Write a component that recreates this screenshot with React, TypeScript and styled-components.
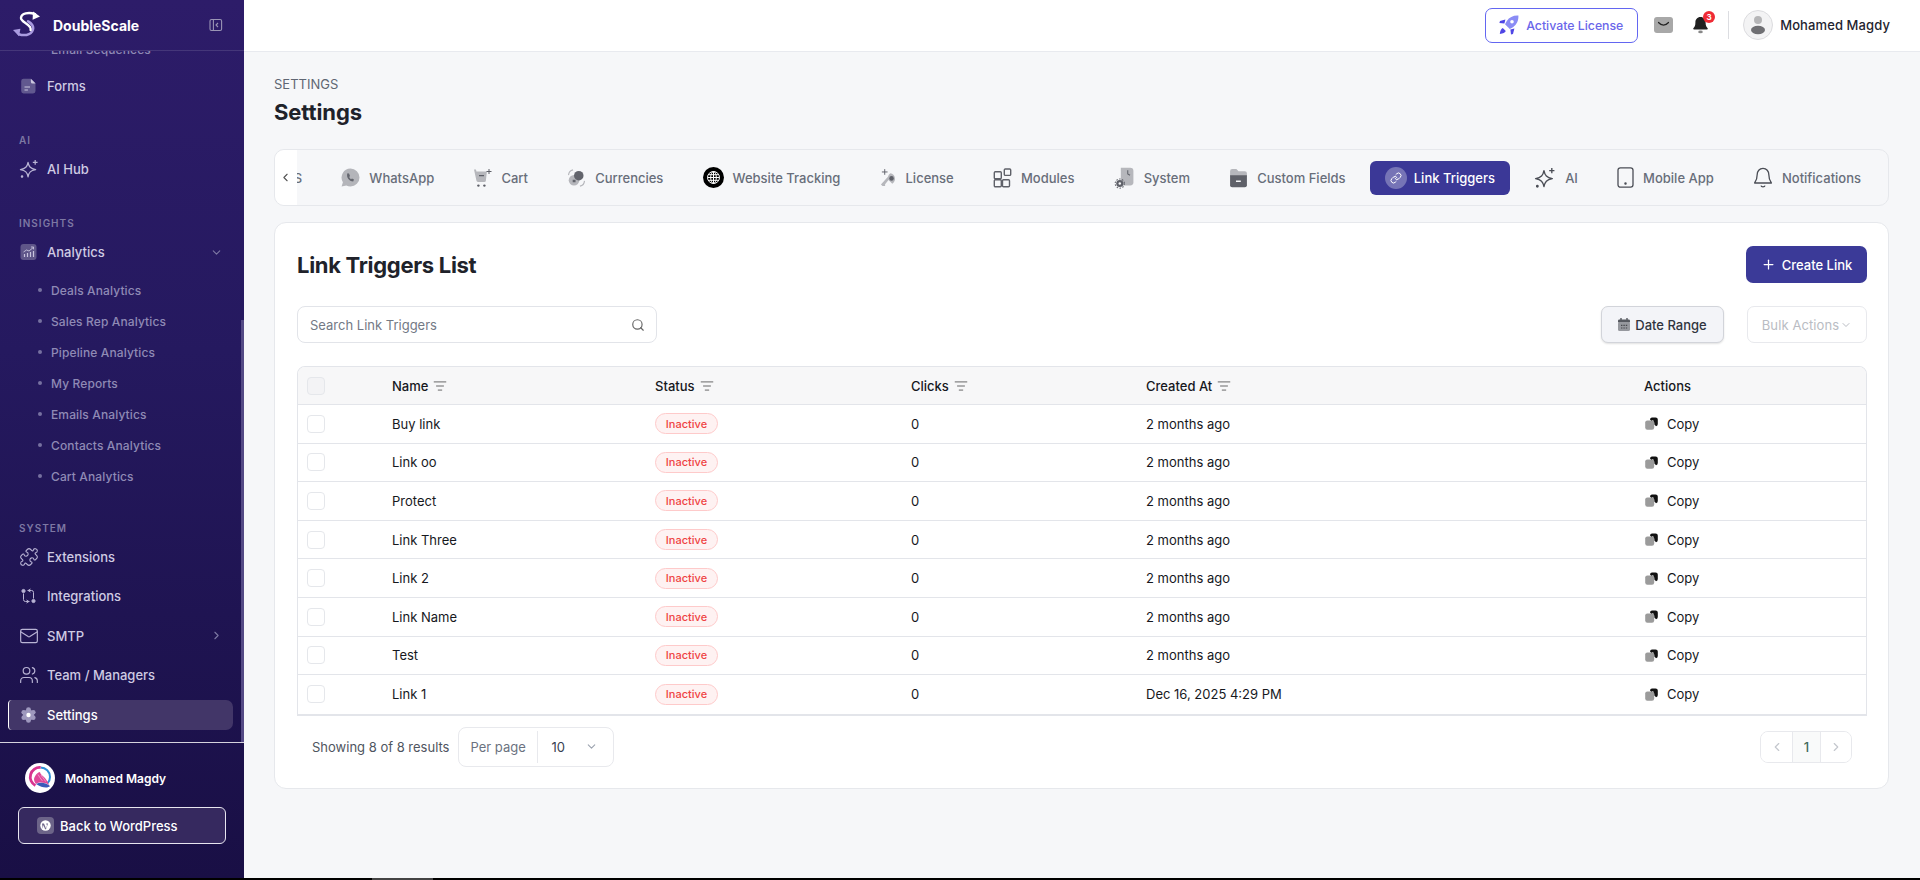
import React from "react";
import styled, { createGlobalStyle } from "styled-components";
import { ChevronDown, ChevronLeft, ChevronRight, ListFilter, Mail, Plus, Puzzle, Search, Users, Link as LinkGlyph } from "lucide-react";

const Global = createGlobalStyle`
  html, body { margin: 0; padding: 0; height: 880px; overflow: hidden; background: #000; }
  body { font-family: Inter, "Liberation Sans", sans-serif; color: #1f2937; }
  * { box-sizing: border-box; }
`;

const Frame = styled.div`
  width: 1920px; height: 880px; display: flex; flex-direction: column;
`;
const Shell = styled.div`
  flex: 1; min-height: 0; display: flex; background: #f6f7f9;
`;
const BottomStrip = styled.div`
  height: 2px; background: #000; padding-left: 372px; display: flex;
`;
const StripThumb = styled.div`
  width: 61px; background: #444;
`;
const Sidebar = styled.aside`
  width: 244px; flex: none; display: flex; flex-direction: column;
  background: linear-gradient(180deg, #2d1c69 0%, #25195f 40%, #190f45 100%);
`;
const Brand = styled.div`
  height: 51px; flex: none; display: flex; align-items: center; padding: 0 21px 0 13px;
  border-bottom: 1px solid rgba(255,255,255,.12); gap: 12px;
`;
const BrandName = styled.div`
  flex: 1; font-size: 14px; font-weight: 700; color: #fff;
`;
const ScrollArea = styled.div`
  flex: 1; min-height: 0; overflow: hidden; position: relative; padding: 0 11px 0 8px;
`;
const ScrollThumb = styled.div`
  position: absolute; right: 0; top: 269px; bottom: 0; width: 3px; background: #544a85;
`;
const NavFlow = styled.nav`
  margin-top: -17.4px; display: flex; flex-direction: column;
`;
const Section = styled.section<{ $mt?: number }>`
  display: flex; flex-direction: column; margin-top: ${p => p.$mt ?? 32}px;
`;
const SectionLabel = styled.div`
  height: 14px; line-height: 14px; margin: 0 0 7px 11px; font-size: 10px; font-weight: 600;
  letter-spacing: 1px; color: #7d78a3; text-transform: uppercase;
`;
const NavList = styled.div`
  display: flex; flex-direction: column; gap: 9.4px;
`;
const NavItem = styled.div<{ $active?: boolean }>`
  height: 30px; display: flex; align-items: center; gap: 10px; padding: 0 11px 0 11px;
  font-size: 13px; font-weight: 500; border-radius: 0 7px 7px 0; width: 225px;
  color: ${p => (p.$active ? "#fff" : "#cfcbe3")};
  background: ${p => (p.$active ? "#423668" : "transparent")};
  border-left: 1px solid ${p => (p.$active ? "#fff" : "transparent")};
  border-top-left-radius: ${p => (p.$active ? "4px" : "0")};
  border-bottom-left-radius: ${p => (p.$active ? "4px" : "0")};
  svg.main { flex: none; color: #b9b4d4; }
  svg.lucide.main { margin: 0 -1.5px; }
`;
const NavText = styled.span` flex: 1; `;
const Caret = styled.span`
  display: flex; color: #7d78a3; margin-right: -1px;
`;
const SubList = styled.div<{ $mt?: number }>`
  display: flex; flex-direction: column; margin-top: ${p => p.$mt ?? -1.8}px; margin-bottom: -2px;
`;
const SubItem = styled.div`
  height: 31px; display: flex; align-items: center; padding-left: 30px; gap: 9px;
  font-size: 12px; font-weight: 500; color: #8f8ab5; letter-spacing: .12px;
`;
const Dot = styled.i`
  width: 4px; height: 4px; border-radius: 50%; background: #7671a0; flex: none;
`;
const SideFoot = styled.div`
  flex: none; height: 136px; border-top: 1px solid #d6d3dd; padding: 20px 18px 0; display: flex; flex-direction: column; gap: 14px;
`;
const Profile = styled.div`
  display: flex; align-items: center; gap: 10px; padding-left: 7px; font-size: 12px; font-weight: 600; color: #fff;
`;
const AvatarLogo = styled.svg`
  width: 30px; height: 30px; flex: none;
`;
const BackButton = styled.div`
  width: 208px; height: 37px; display: flex; align-items: center; gap: 6px; padding-left: 18px;
  border: 1px solid #e7e5ef; border-radius: 6px; background: #36295f; color: #fff; font-size: 13px; font-weight: 500;
`;
const WpTile = styled.span`
  width: 17px; height: 17px; border-radius: 4px; background: #6c6488; display: flex; align-items: center; justify-content: center;
`;

const Main = styled.main`
  flex: 1; min-width: 0; display: flex; flex-direction: column;
`;
const Topbar = styled.header`
  height: 52px; flex: none; background: #fff; border-bottom: 1px solid #e8eaef;
  display: flex; align-items: center; justify-content: flex-end; padding: 0 30px 1px 0;
`;
const ActivateBtn = styled.div`
  width: 153px; height: 35px; border: 1px solid #6366f1; border-radius: 7px; display: flex; align-items: center; gap: 7px; padding-left: 13px;
  font-size: 12.3px; font-weight: 500; color: #6a66ea; margin-right: 16px; background: #fff;
`;
const TopIcon = styled.span<{ $mr: number }>`
  display: flex; position: relative; margin-right: ${p => p.$mr}px;
`;
const Badge = styled.span`
  position: absolute; top: -5px; right: -7px; width: 12px; height: 12px; border-radius: 50%; background: #ef2b35; color: #fff;
  font-size: 8px; font-weight: 700; display: flex; align-items: center; justify-content: center;
`;
const VDivider = styled.div`
  width: 1px; height: 28px; background: #dcdde1; margin-right: 14px;
`;
const UserCircle = styled.span`
  width: 30px; height: 30px; border-radius: 50%; border: 1px solid #dcdcdf; background: #f3f3f4; display: flex; align-items: center; justify-content: center; overflow: hidden; margin-right: 7px; color: #777;
`;
const UserName = styled.span`
  font-size: 13px; font-weight: 500; color: #1f2430; letter-spacing: .1px;
`;
const Content = styled.div`
  flex: 1; padding: 24px 31px 0 30px; display: flex; flex-direction: column;
`;
const Crumb = styled.div`
  font-size: 13px; line-height: 16px; color: #5f6673; text-transform: uppercase; font-weight: 400;
`;
const PageTitle = styled.h1`
  margin: 5px 0 0; font-size: 22px; line-height: 30px; font-weight: 650; color: #20222a; letter-spacing: -.1px;
`;
const TabsBar = styled.div`
  margin-top: 22px; height: 57px; border: 1px solid #e6e8ec; border-radius: 10px; position: relative; overflow: hidden;
  display: flex; align-items: center; justify-content: flex-end; padding-right: 12px;
`;
const TabScrollBtn = styled.div`
  position: absolute; left: 0; top: 0; bottom: 0; width: 22px; background: #fff; display: flex; align-items: center; justify-content: flex-end; padding-right: 5px; color: #555; border-radius: 8px 0 0 8px; z-index: 1;
`;
const Tab = styled.div<{ $active?: boolean }>`
  flex: none; height: 34px; display: flex; align-items: center; gap: 9px; padding: 0 15px; margin-left: 9.2px; border-radius: 6px;
  font-size: 13px; font-weight: 500; white-space: nowrap;
  color: ${p => (p.$active ? "#fff" : "#686e7a")};
  background: ${p => (p.$active ? "#3b3897" : "transparent")};
  svg { flex: none; }
`;
const LinkCircle = styled.span`
  width: 22px; height: 22px; border-radius: 50%; background: rgba(255,255,255,.3); display: flex; align-items: center; justify-content: center; color: #fff; margin-right: -2px;
`;
const Card = styled.section`
  margin-top: 16px; background: #fff; border: 1px solid #e6e8ec; border-radius: 12px; padding: 23px 21px 21px 22px;
`;
const CardHead = styled.div`
  display: flex; justify-content: space-between; align-items: center; height: 37px;
`;
const CardTitle = styled.h2`
  margin: 0; font-size: 22px; font-weight: 650; color: #20222a; letter-spacing: -.3px;
`;
const CreateBtn = styled.div`
  width: 121px; height: 37px; border-radius: 7px; background: #3b3a98; color: #fff; display: flex; align-items: center; justify-content: center; gap: 6px; font-size: 13px; font-weight: 500;
`;
const Toolbar = styled.div`
  margin-top: 23px; display: flex; align-items: center; height: 37px; gap: 23px;
`;
const SearchBox = styled.div`
  width: 360px; height: 37px; border: 1px solid #e2e4e9; border-radius: 8px; display: flex; align-items: center; justify-content: space-between; padding: 0 11px 0 12px;
  color: #737985; font-size: 13px; margin-right: auto;
`;
const DateBtn = styled.div`
  width: 123px; height: 37px; border: 1px solid #d2d4da; border-radius: 7px; background: #f3f4f8; box-shadow: 0 1px 2px rgba(0,0,0,.12);
  display: flex; align-items: center; justify-content: center; gap: 5px; font-size: 13px; font-weight: 500; color: #30343f;
`;
const BulkBtn = styled.div`
  width: 120px; height: 37px; border: 1px solid #e8e9ed; border-radius: 7px; display: flex; align-items: center; justify-content: center; gap: 1px;
  font-size: 13px; letter-spacing: .1px; color: #b9bcc3; background: #fff;
`;
const Table = styled.div`
  margin-top: 23px; border: 1px solid #e3e5ea; border-bottom-width: 2px; border-radius: 8px 8px 0 0; overflow: hidden;
`;
const Row = styled.div<{ $head?: boolean }>`
  display: grid; grid-template-columns: 94px 263px 256px 235px 498px 1fr; align-items: center;
  height: ${p => (p.$head ? "38px" : "38.6px")};
  background: ${p => (p.$head ? "#f7f7f8" : "#fff")};
  border-bottom: 1px solid #e3e5ea;
  font-size: 13px; font-weight: ${p => (p.$head ? 500 : 400)}; color: #16181d;
  &:last-child { border-bottom: 0; }
`;
const CheckCell = styled.div`
  padding-left: 9px; display: flex;
`;
const CheckBox = styled.span`
  width: 18px; height: 18px; border: 1px solid #e5e7eb; border-radius: 4px; background: #fff;
`;
const HeadCheck = styled(CheckBox)`
  background: #f3f3f5;
`;
const HeadCell = styled.div`
  display: flex; align-items: center; gap: 5px;
  svg { color: #555; }
`;
const StatusPill = styled.span`
  display: inline-flex; align-items: center; justify-content: center; width: 63px; height: 21px; border-radius: 11px; border: 1px solid #fecaca; background: #fef2f2; color: #ef4444; font-size: 11px; font-weight: 500;
`;
const CopyCell = styled.div`
  display: flex; align-items: center; gap: 9px; padding-left: 1px;
`;
const TableFoot = styled.div`
  margin-top: 11px; display: flex; align-items: center; padding: 0 15px;
`;
const ShowText = styled.div`
  font-size: 13px; color: #4f5560; margin-right: 9px;
`;
const PerPage = styled.div`
  width: 156px; height: 40px; border: 1px solid #e8e9ed; border-radius: 8px; display: flex; align-items: center; font-size: 13px; color: #6b7280; margin-right: auto;
`;
const PerLabel = styled.div`
  padding: 0 11px; height: 32px; line-height: 32px; border-right: 1px solid #e8e9ed; width: 79px; white-space: nowrap;
`;
const PerValue = styled.div`
  flex: 1; display: flex; justify-content: space-between; align-items: center; padding: 0 15px 0 13px; color: #374151;
  svg { color: #9ca3af; }
`;
const Pager = styled.div`
  width: 92px; height: 32px; border: 1px solid #e8e9ed; border-radius: 8px; display: grid; grid-template-columns: 31px 29px 1fr; overflow: hidden;
`;
const PagerCell = styled.div<{ $on?: boolean }>`
  display: flex; align-items: center; justify-content: center; font-size: 13px; color: ${p => (p.$on ? "#3f6a5a" : "#c4c7cd")};
  background: ${p => (p.$on ? "#f9fafa" : "#fff")};
  border-left: ${p => (p.$on ? "1px solid #e8e9ed" : "0")};
  border-right: ${p => (p.$on ? "1px solid #e8e9ed" : "0")};
  font-weight: 500;
`;

const LogoMark = () => (
  <svg width="28" height="28" viewBox="0 0 28 28" fill="none">
    <path d="M15 10.2c2.6 1.8 5.4 3.4 5.2 7-.2 5-6.4 8.6-14.4 6" stroke="#a99be0" strokeWidth="2.5" strokeLinecap="round" />
    <path d="M0 19l7.4-1.2-1.4 7.4z" fill="#a99be0" />
    <path d="M22 3.2C15.6 .8 8.4 2.4 8 6.8c-.3 3.6 6.2 5 9 9.2.6 1 .8 2 .6 3" stroke="#fff" strokeWidth="2.4" strokeLinecap="round" />
    <path d="M20 .4l7 5-7.4 3.4z" fill="#fff" />
  </svg>
);
const Collapse = () => (
  <svg width="14" height="14" viewBox="0 0 14 14" fill="none" stroke="#9a95b5" strokeWidth="1.1">
    <rect x="1" y="1.5" width="11.6" height="11" rx="1.5" />
    <path d="M4.4 1.5v11M9 5l-2 2 2 2" />
  </svg>
);
const FormsIcon = () => (
  <svg className="main" width="17" height="16" viewBox="-.5 0 17 16">
    <path d="M3 .8h7l5 5V13a2.4 2.4 0 0 1-2.4 2.4H3A2.4 2.4 0 0 1 .7 13V3A2.3 2.3 0 0 1 3 .8z" fill="#61588f" />
    <path d="M10.4.8l4.8 4.8h-3.2a1.6 1.6 0 0 1-1.6-1.6z" fill="#cbc7df" />
    <path d="M4 9h5.5M4 12h3.4" stroke="#cbc7df" strokeWidth="1" />
  </svg>
);
const ChartIcon = () => (
  <svg className="main" width="17" height="16" viewBox="-.5 0 17 16">
    <rect width="16" height="16" rx="3" fill="#5f5689" />
    <path d="M3 8l3-2 2.5 1L13 3.3M10.5 3H13v2.4" stroke="#c8c4de" strokeWidth=".9" fill="none" />
    <path d="M4 13v-3M7 13V9M10 13V8M13 13V7" stroke="#c8c4de" strokeWidth="1.2" />
  </svg>
);
const IntegrationIcon = () => (
  <svg className="main" width="17" height="16" viewBox="-.5 0 17 16" fill="none" stroke="#b9b4d4" strokeWidth="1">
    <circle cx="3" cy="3" r="1.6" fill="#b9b4d4" />
    <circle cx="13" cy="13" r="1.6" fill="#b9b4d4" />
    <path d="M3 5.5v6a2 2 0 0 0 2 2h4M13 10.5v-6a2 2 0 0 0-2-2H7M10 1l-2.4 1.5L10 4M6 12l2.4 1.5L6 15" />
  </svg>
);
const GearIcon = () => (
  <svg className="main" width="17" height="16" viewBox="-.5 0 17 16" fill="#9e98bd">
    <circle cx="8" cy="8" r="5.6" />
    <circle cx="8" cy="2.6" r="2.4" />
    <circle cx="8" cy="13.4" r="2.4" />
    <circle cx="3.3" cy="5.3" r="2.4" />
    <circle cx="12.7" cy="5.3" r="2.4" />
    <circle cx="3.3" cy="10.7" r="2.4" />
    <circle cx="12.7" cy="10.7" r="2.4" />
    <circle cx="8" cy="8" r="2.2" fill="#fff" />
  </svg>
);
const SparkleIcon = ({ size = 21, color = "#4b4e56", sw = 1.3, cls }: { size?: number; color?: string; sw?: number; cls?: string }) => (
  <svg className={cls} width={size} height={size} viewBox="0 0 21 21" fill="none" stroke={color} strokeWidth={sw} strokeLinejoin="round">
    <path d="M9.5 3.5c.9 4.6 2.6 6.6 8 7.6-5.4 1-7.1 3-8 7.6-.9-4.6-2.6-6.6-8-7.6 5.4-1 7.1-3 8-7.6z" />
    <path d="M17 1v5M14.5 3.5h5" />
    <circle cx="3.2" cy="18.4" r=".7" fill={color} />
  </svg>
);
const QLogo = () => (
  <AvatarLogo viewBox="0 0 30 30">
    <circle cx="15" cy="15" r="15" fill="#fff" />
    <path d="M15.6 4.5a9.5 9.5 0 0 1 9.4 9.5c0 2.4-1 4.6-2.4 6.2" fill="none" stroke="#2f8fd6" strokeWidth="2" />
    <path d="M10.4 22.4A9.5 9.5 0 0 1 15.6 4.5" fill="none" stroke="#d8348f" strokeWidth="2.8" />
    <path d="M9 16c1-4 4-7 6-7 0 2 2 3 4 5 2 2 3.4 4 5 8-5-3-10-3-13-1-1-1-2-3-2-5z" fill="#e0489a" />
    <path d="M13 11.5c1 2.6 3 4 4.4 6.4M16 12c1 2 3 3.4 4.6 6.6" stroke="#f6b6d8" strokeWidth=".7" fill="none" />
    <path d="M11 21c4-2 9-2 14 2-2 2.4-8 2-14-2z" fill="#3a5ab8" />
  </AvatarLogo>
);
const WpGlyph = () => (
  <svg width="11" height="11" viewBox="0 0 11 11">
    <circle cx="5.5" cy="5.5" r="5.2" fill="#fff" />
    <path d="M2 3.4h2l2 5 1-3-.8-2H8l-2 5.8h-.9L3.4 5 2.8 8.8z" fill="#6c6488" />
  </svg>
);
const Rocket = () => (
  <svg width="20" height="20" viewBox="0 0 20 20" fill="#6366f1">
    <path d="M19.4.6c-5-.3-9 1.6-11.6 5.4L6 9.2l4.8 4.8 3.2-1.8c3.8-2.6 5.7-6.6 5.4-11.6zM13 8.6a1.8 1.8 0 1 1 0-3.6 1.8 1.8 0 0 1 0 3.6z" fill="#8a8cf5" />
    <path d="M6.4 4.6L1 6l-.6 2 5 .6zM15.4 13.6L14 19l-2 .6-.6-5zM3.8 13c-1.6.6-2.6 2.6-3 6 3.4-.4 5.4-1.4 6-3z" fill="#4f46e5" />
  </svg>
);
const MailTile = () => (
  <svg width="19" height="16" viewBox="0 0 19 16">
    <rect width="19" height="16" rx="3" fill="#a8a8a8" />
    <path d="M4.5 5.5c3 3.4 7 3.4 10 0" stroke="#222" strokeWidth="1.2" fill="none" strokeLinecap="round" />
  </svg>
);
const BellFill = () => (
  <svg width="15" height="18" viewBox="0 0 15 18">
    <path d="M7.5 1C4.2 1 2.4 3.6 2.4 6.4c0 3.4-1 4.6-2 5.8-.5.7-.1 1.4.7 1.4h12.8c.8 0 1.2-.7.7-1.4-1-1.2-2-2.4-2-5.8C12.6 3.6 10.8 1 7.5 1z" fill="#202020" />
    <ellipse cx="7.5" cy="15.9" rx="2.3" ry="1.4" fill="#888" />
  </svg>
);
const PersonFill = () => (
  <svg width="16" height="20" viewBox="0 0 16 20">
    <circle cx="8" cy="5" r="4" fill="#b5b5b7" />
    <ellipse cx="8" cy="15" rx="7" ry="4.2" fill="#6f6f73" />
  </svg>
);
const WhatsAppIcon = () => (
  <svg width="19" height="19" viewBox="0 0 19 19">
    <path d="M9.5.5a9 9 0 0 1 0 18c-1.5 0-3-.4-4.2-1L.6 18.6l1.3-4.4A9 9 0 0 1 9.5.5z" fill="#b4b5ba" />
    <path d="M6.4 5.2c-1.4 4 1.6 8 5.8 8.2l.8-2-2-1-1 .8c-.8-.5-1.5-1.4-1.8-2.2l.8-1-1-2.6z" fill="#64666e" />
  </svg>
);
const CartIcon = () => (
  <svg width="19" height="20" viewBox="0 0 19 20">
    <path d="M1 1.5h2l.4 2h10.5l-1 9a1.6 1.6 0 0 1-1.6 1.5H5a1.6 1.6 0 0 1-1.6-1.4z" fill="#b6b7bc" />
    <path d="M6 7.6h5" stroke="#5d5f67" strokeWidth="1.2" />
    <circle cx="5.4" cy="17.6" r="1.2" fill="#5d5f67" />
    <circle cx="11.4" cy="17.6" r="1.2" fill="#5d5f67" />
    <path d="M16 1v5M13.5 3.5h5" stroke="#5d5f67" strokeWidth="1" />
  </svg>
);
const CurrencyIcon = () => (
  <svg width="19" height="20" viewBox="0 0 20 20">
    <path d="M1.6 7C1.8 4 3.6 2 6.4 1.4M18.4 13c-.2 3-2 5-4.8 5.6" stroke="#b6b7bc" fill="none" strokeWidth="1.2" />
    <circle cx="7.4" cy="12.4" r="5.6" fill="#b6b7bc" />
    <circle cx="12.4" cy="7.6" r="5" fill="#62646c" />
    <path d="M6 11.8h3v2.6H6z" fill="#62646c" />
  </svg>
);
const GlobeIcon = () => (
  <svg width="21" height="21" viewBox="0 0 21 21" fill="none">
    <circle cx="10.5" cy="10.5" r="10.5" fill="#000" />
    <g stroke="#fff" strokeWidth="1">
      <circle cx="10.5" cy="10.5" r="6" />
      <ellipse cx="10.5" cy="10.5" rx="2.8" ry="6" />
      <path d="M4.5 10.5h12M5.3 7.7h10.4M5.3 13.3h10.4M10.5 4.5v12" />
    </g>
  </svg>
);
const KeyIcon = () => (
  <svg width="17" height="20" viewBox="0 0 18 20">
    <path d="M11 5a6 6 0 0 1 2 11l-4-4-3.6 4.6v2H2.6L1 17l7.4-8.4A6 6 0 0 1 11 5z" fill="#b6b7bc" />
    <circle cx="12.2" cy="10.4" r="2.4" fill="#5f6169" />
    <path d="M5 .6v6M2 3.6h6" stroke="#5f6169" strokeWidth="1" />
  </svg>
);
const ModulesIcon = () => (
  <svg width="19" height="20" viewBox="0 0 18 20" fill="none" stroke="#5f6169" strokeWidth="1.4">
    <rect x=".8" y="3.8" width="7" height="7" rx="1" />
    <rect x=".8" y="11.8" width="7" height="7" rx="1" />
    <rect x="9" y="11.8" width="7" height="7" rx="1" />
    <rect x="10.8" y="1" width="6.4" height="6.4" rx="1" />
  </svg>
);
const SystemIcon = () => (
  <svg width="21" height="22" viewBox="0 0 19 21">
    <path d="M6 .6h9a3 3 0 0 1 3 3v11a3 3 0 0 1-3 3H6z" fill="#b6b7bc" />
    <path d="M12.6 3v3.6l2.2 1.2" stroke="#5f6169" fill="none" />
    <circle cx="5" cy="15.8" r="3.4" fill="#5f6169" />
    <circle cx="5" cy="15.8" r="1.2" fill="#f6f7f9" />
    <circle cx="5" cy="15.8" r="4.4" fill="none" stroke="#5f6169" strokeWidth="1" strokeDasharray="1.4 1.4" />
  </svg>
);
const FolderIcon = () => (
  <svg width="19" height="20" viewBox="0 0 18 19">
    <path d="M1 3a2 2 0 0 1 2-2h4l2 2h6a2 2 0 0 1 2 2v3H1z" fill="#b6b7bc" />
    <path d="M1 7h16v9.4a2 2 0 0 1-2 2H3a2 2 0 0 1-2-2z" fill="#5f6169" />
    <path d="M6.6 12.6h4.6" stroke="#f6f7f9" strokeWidth="1.6" />
  </svg>
);
const PhoneIcon = () => (
  <svg width="17" height="21" viewBox="0 0 17 21" fill="none" stroke="#4b4e56" strokeWidth="1.3">
    <rect x="1" y=".8" width="15" height="19.4" rx="2.4" />
    <circle cx="8.5" cy="16.6" r=".6" fill="#4b4e56" />
  </svg>
);
const BellLine = () => (
  <svg width="20" height="22" viewBox="0 0 20 22" fill="none" stroke="#4b4e56" strokeWidth="1.3" strokeLinejoin="round">
    <path d="M10 1.4c-3.6 0-5.8 2.8-5.8 6.2 0 4-1 6.4-2.6 8.4h16.8c-1.6-2-2.6-4.4-2.6-8.4 0-3.4-2.2-6.2-5.8-6.2z" />
    <path d="M8 18.6c.4 1.6 3.6 1.6 4 0" />
  </svg>
);
const CopyGlyph = () => (
  <svg width="13" height="13" viewBox="0 0 13 13">
    <path d="M5 2.4A2.2 2.2 0 0 1 7 .4h3.6A2.2 2.2 0 0 1 12.8 2.6V7a2.2 2.2 0 0 1-1.8 2.2z" fill="#111" />
    <path d="M7.8 3v2.4l1.6.8" stroke="#fff" strokeWidth=".9" fill="none" />
    <rect x=".2" y="3.4" width="9" height="9.4" rx="2.2" fill="#9b9b9b" />
  </svg>
);
const CalendarGlyph = () => (
  <svg width="12" height="13" viewBox="0 0 12 13">
    <rect y="1.4" width="12" height="3.6" rx="1.4" fill="#55585f" />
    <path d="M3 0v3M9 0v3" stroke="#55585f" strokeWidth="1.4" />
    <rect y="4" width="12" height="9" rx="1.6" fill="#96989e" />
    <path d="M3 7.4h1.4M5.4 7.4h1.4M7.8 7.4h1.4M3 10h1.4M5.4 10h1.4M7.8 10h1.4" stroke="#45474d" strokeWidth="1.1" />
  </svg>
);

const subs = ["Deals Analytics", "Sales Rep Analytics", "Pipeline Analytics", "My Reports", "Emails Analytics", "Contacts Analytics", "Cart Analytics"];
const rows = [
  ["Buy link", "2 months ago"],
  ["Link oo", "2 months ago"],
  ["Protect", "2 months ago"],
  ["Link Three", "2 months ago"],
  ["Link 2", "2 months ago"],
  ["Link Name", "2 months ago"],
  ["Test", "2 months ago"],
  ["Link 1", "Dec 16, 2025 4:29 PM"],
];
const tabs: [string, React.ReactNode][] = [
  ["SMS", <></>],
  ["WhatsApp", <WhatsAppIcon />],
  ["Cart", <CartIcon />],
  ["Currencies", <CurrencyIcon />],
  ["Website Tracking", <GlobeIcon />],
  ["License", <KeyIcon />],
  ["Modules", <ModulesIcon />],
  ["System", <SystemIcon />],
  ["Custom Fields", <FolderIcon />],
  ["Link Triggers", <LinkCircle><LinkGlyph size={12} /></LinkCircle>],
  ["AI", <SparkleIcon size={22} />],
  ["Mobile App", <PhoneIcon />],
  ["Notifications", <BellLine />],
];
const Filter = () => <ListFilter size={14} strokeWidth={1.5} />;

export default function App() {
  return (
    <Frame>
      <Global />
      <Shell>
        <Sidebar>
          <Brand>
            <LogoMark />
            <BrandName>DoubleScale</BrandName>
            <Collapse />
          </Brand>
          <ScrollArea>
            <NavFlow>
              <SubList $mt={0}>
                <SubItem><Dot />Email Sequences</SubItem>
              </SubList>
              <Section $mt={8.4}>
                <NavItem><FormsIcon /><NavText>Forms</NavText></NavItem>
              </Section>
              <Section>
                <SectionLabel>AI</SectionLabel>
                <NavItem><SparkleIcon cls="main lucide" size={20} color="#b9b4d4" sw={1.3} /><NavText>AI Hub</NavText></NavItem>
              </Section>
              <Section>
                <SectionLabel>Insights</SectionLabel>
                <NavList>
                  <NavItem><ChartIcon /><NavText>Analytics</NavText><Caret><ChevronDown size={13} /></Caret></NavItem>
                  <SubList>
                    {subs.map(s => <SubItem key={s}><Dot />{s}</SubItem>)}
                  </SubList>
                </NavList>
              </Section>
              <Section $mt={31.4}>
                <SectionLabel>System</SectionLabel>
                <NavList>
                  <NavItem><Puzzle className="main" size={20} strokeWidth={1.3} /><NavText>Extensions</NavText></NavItem>
                  <NavItem><IntegrationIcon /><NavText>Integrations</NavText></NavItem>
                  <NavItem><Mail className="main" size={20} strokeWidth={1.4} /><NavText>SMTP</NavText><Caret><ChevronRight size={13} /></Caret></NavItem>
                  <NavItem><Users className="main" size={20} strokeWidth={1.4} /><NavText>Team / Managers</NavText></NavItem>
                  <NavItem $active><GearIcon /><NavText>Settings</NavText></NavItem>
                </NavList>
              </Section>
            </NavFlow>
            <ScrollThumb />
          </ScrollArea>
          <SideFoot>
            <Profile><QLogo />Mohamed Magdy</Profile>
            <BackButton><WpTile><WpGlyph /></WpTile>Back to WordPress</BackButton>
          </SideFoot>
        </Sidebar>
        <Main>
          <Topbar>
            <ActivateBtn><Rocket />Activate License</ActivateBtn>
            <TopIcon $mr={20}><MailTile /></TopIcon>
            <TopIcon $mr={20}><BellFill /><Badge>3</Badge></TopIcon>
            <VDivider />
            <UserCircle><PersonFill /></UserCircle>
            <UserName>Mohamed Magdy</UserName>
          </Topbar>
          <Content>
            <Crumb>Settings</Crumb>
            <PageTitle>Settings</PageTitle>
            <TabsBar>
              <TabScrollBtn><ChevronLeft size={13} /></TabScrollBtn>
              {tabs.map(([label, icon]) => (
                <Tab key={label} $active={label === "Link Triggers"}>{icon}{label}</Tab>
              ))}
            </TabsBar>
            <Card>
              <CardHead>
                <CardTitle>Link Triggers List</CardTitle>
                <CreateBtn><Plus size={15} />Create Link</CreateBtn>
              </CardHead>
              <Toolbar>
                <SearchBox>Search Link Triggers<Search size={14} color="#666" /></SearchBox>
                <DateBtn><CalendarGlyph />Date Range</DateBtn>
                <BulkBtn>Bulk Actions<ChevronDown size={12} /></BulkBtn>
              </Toolbar>
              <Table>
                <Row $head>
                  <CheckCell><HeadCheck /></CheckCell>
                  <HeadCell>Name <Filter /></HeadCell>
                  <HeadCell>Status <Filter /></HeadCell>
                  <HeadCell>Clicks <Filter /></HeadCell>
                  <HeadCell>Created At <Filter /></HeadCell>
                  <HeadCell>Actions</HeadCell>
                </Row>
                {rows.map(([name, date]) => (
                  <Row key={name}>
                    <CheckCell><CheckBox /></CheckCell>
                    <div>{name}</div>
                    <div><StatusPill>Inactive</StatusPill></div>
                    <div>0</div>
                    <div>{date}</div>
                    <CopyCell><CopyGlyph />Copy</CopyCell>
                  </Row>
                ))}
              </Table>
              <TableFoot>
                <ShowText>Showing 8 of 8 results</ShowText>
                <PerPage>
                  <PerLabel>Per page</PerLabel>
                  <PerValue>10<ChevronDown size={13} /></PerValue>
                </PerPage>
                <Pager>
                  <PagerCell><ChevronLeft size={14} /></PagerCell>
                  <PagerCell $on>1</PagerCell>
                  <PagerCell><ChevronRight size={14} /></PagerCell>
                </Pager>
              </TableFoot>
            </Card>
          </Content>
        </Main>
      </Shell>
      <BottomStrip><StripThumb /></BottomStrip>
    </Frame>
  );
}
